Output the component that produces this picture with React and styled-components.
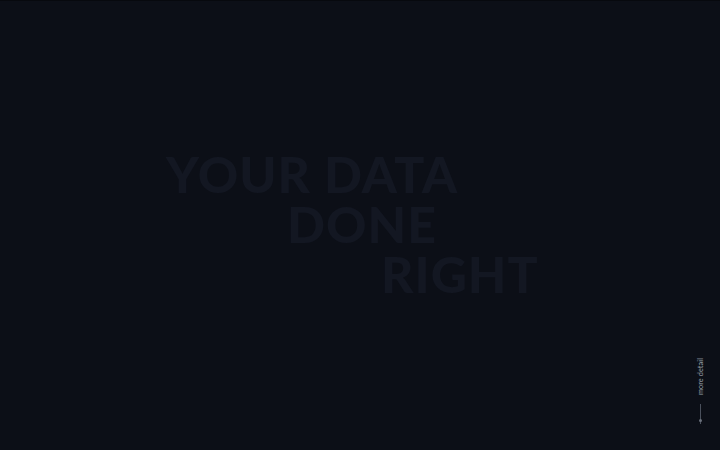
import React from 'react';
import styled, { createGlobalStyle } from 'styled-components';

const GlobalStyle = createGlobalStyle`
  html, body {
    margin: 0;
    padding: 0;
    background: #0c0f17;
  }
  body {
    font-family: Lato, "Open Sans", sans-serif;
  }
`;

const Page = styled.div`
  position: relative;
  width: 720px;
  height: 450px;
  overflow: hidden;
  background: #0c0f17;
  border-top: 1px solid #07090e;
  box-sizing: border-box;
`;

const Hero = styled.h1`
  margin: 0;
  padding: 148px 0 0 166px;
  display: flex;
  flex-direction: column;
  font-family: Lato, sans-serif;
  font-weight: 900;
  font-size: 50px;
  line-height: 50px;
  color: #131722;
  text-transform: uppercase;
  letter-spacing: 1px;
`;

const Line = styled.span`
  display: block;
  padding-left: ${(p) => p.indent}px;
  white-space: nowrap;
`;

const ScrollHint = styled.a`
  position: absolute;
  right: 14px;
  top: 357px;
  width: 12px;
  display: flex;
  flex-direction: column;
  align-items: center;
  gap: 9px;
  text-decoration: none;
`;

const HintLabel = styled.span`
  writing-mode: vertical-rl;
  transform: rotate(180deg);
  font-family: Lato, sans-serif;
  font-size: 7.3px;
  letter-spacing: 0.1px;
  color: #9aa0ab;
  white-space: nowrap;
`;

const HintLine = styled.span`
  position: relative;
  width: 1px;
  height: 20px;
  background: #4a505c;

  &::after {
    content: '';
    position: absolute;
    left: -1px;
    bottom: 2px;
    width: 3px;
    height: 3px;
    border-radius: 50%;
    background: #6b717c;
  }
`;

export default function App() {
  return (
    <>
      <GlobalStyle />
      <Page>
        <Hero>
          <Line indent={0}>Your Data</Line>
          <Line indent={121}>Done</Line>
          <Line indent={215}>Right</Line>
        </Hero>
        <ScrollHint href="#detail">
          <HintLabel>more detail</HintLabel>
          <HintLine />
        </ScrollHint>
      </Page>
    </>
  );
}
